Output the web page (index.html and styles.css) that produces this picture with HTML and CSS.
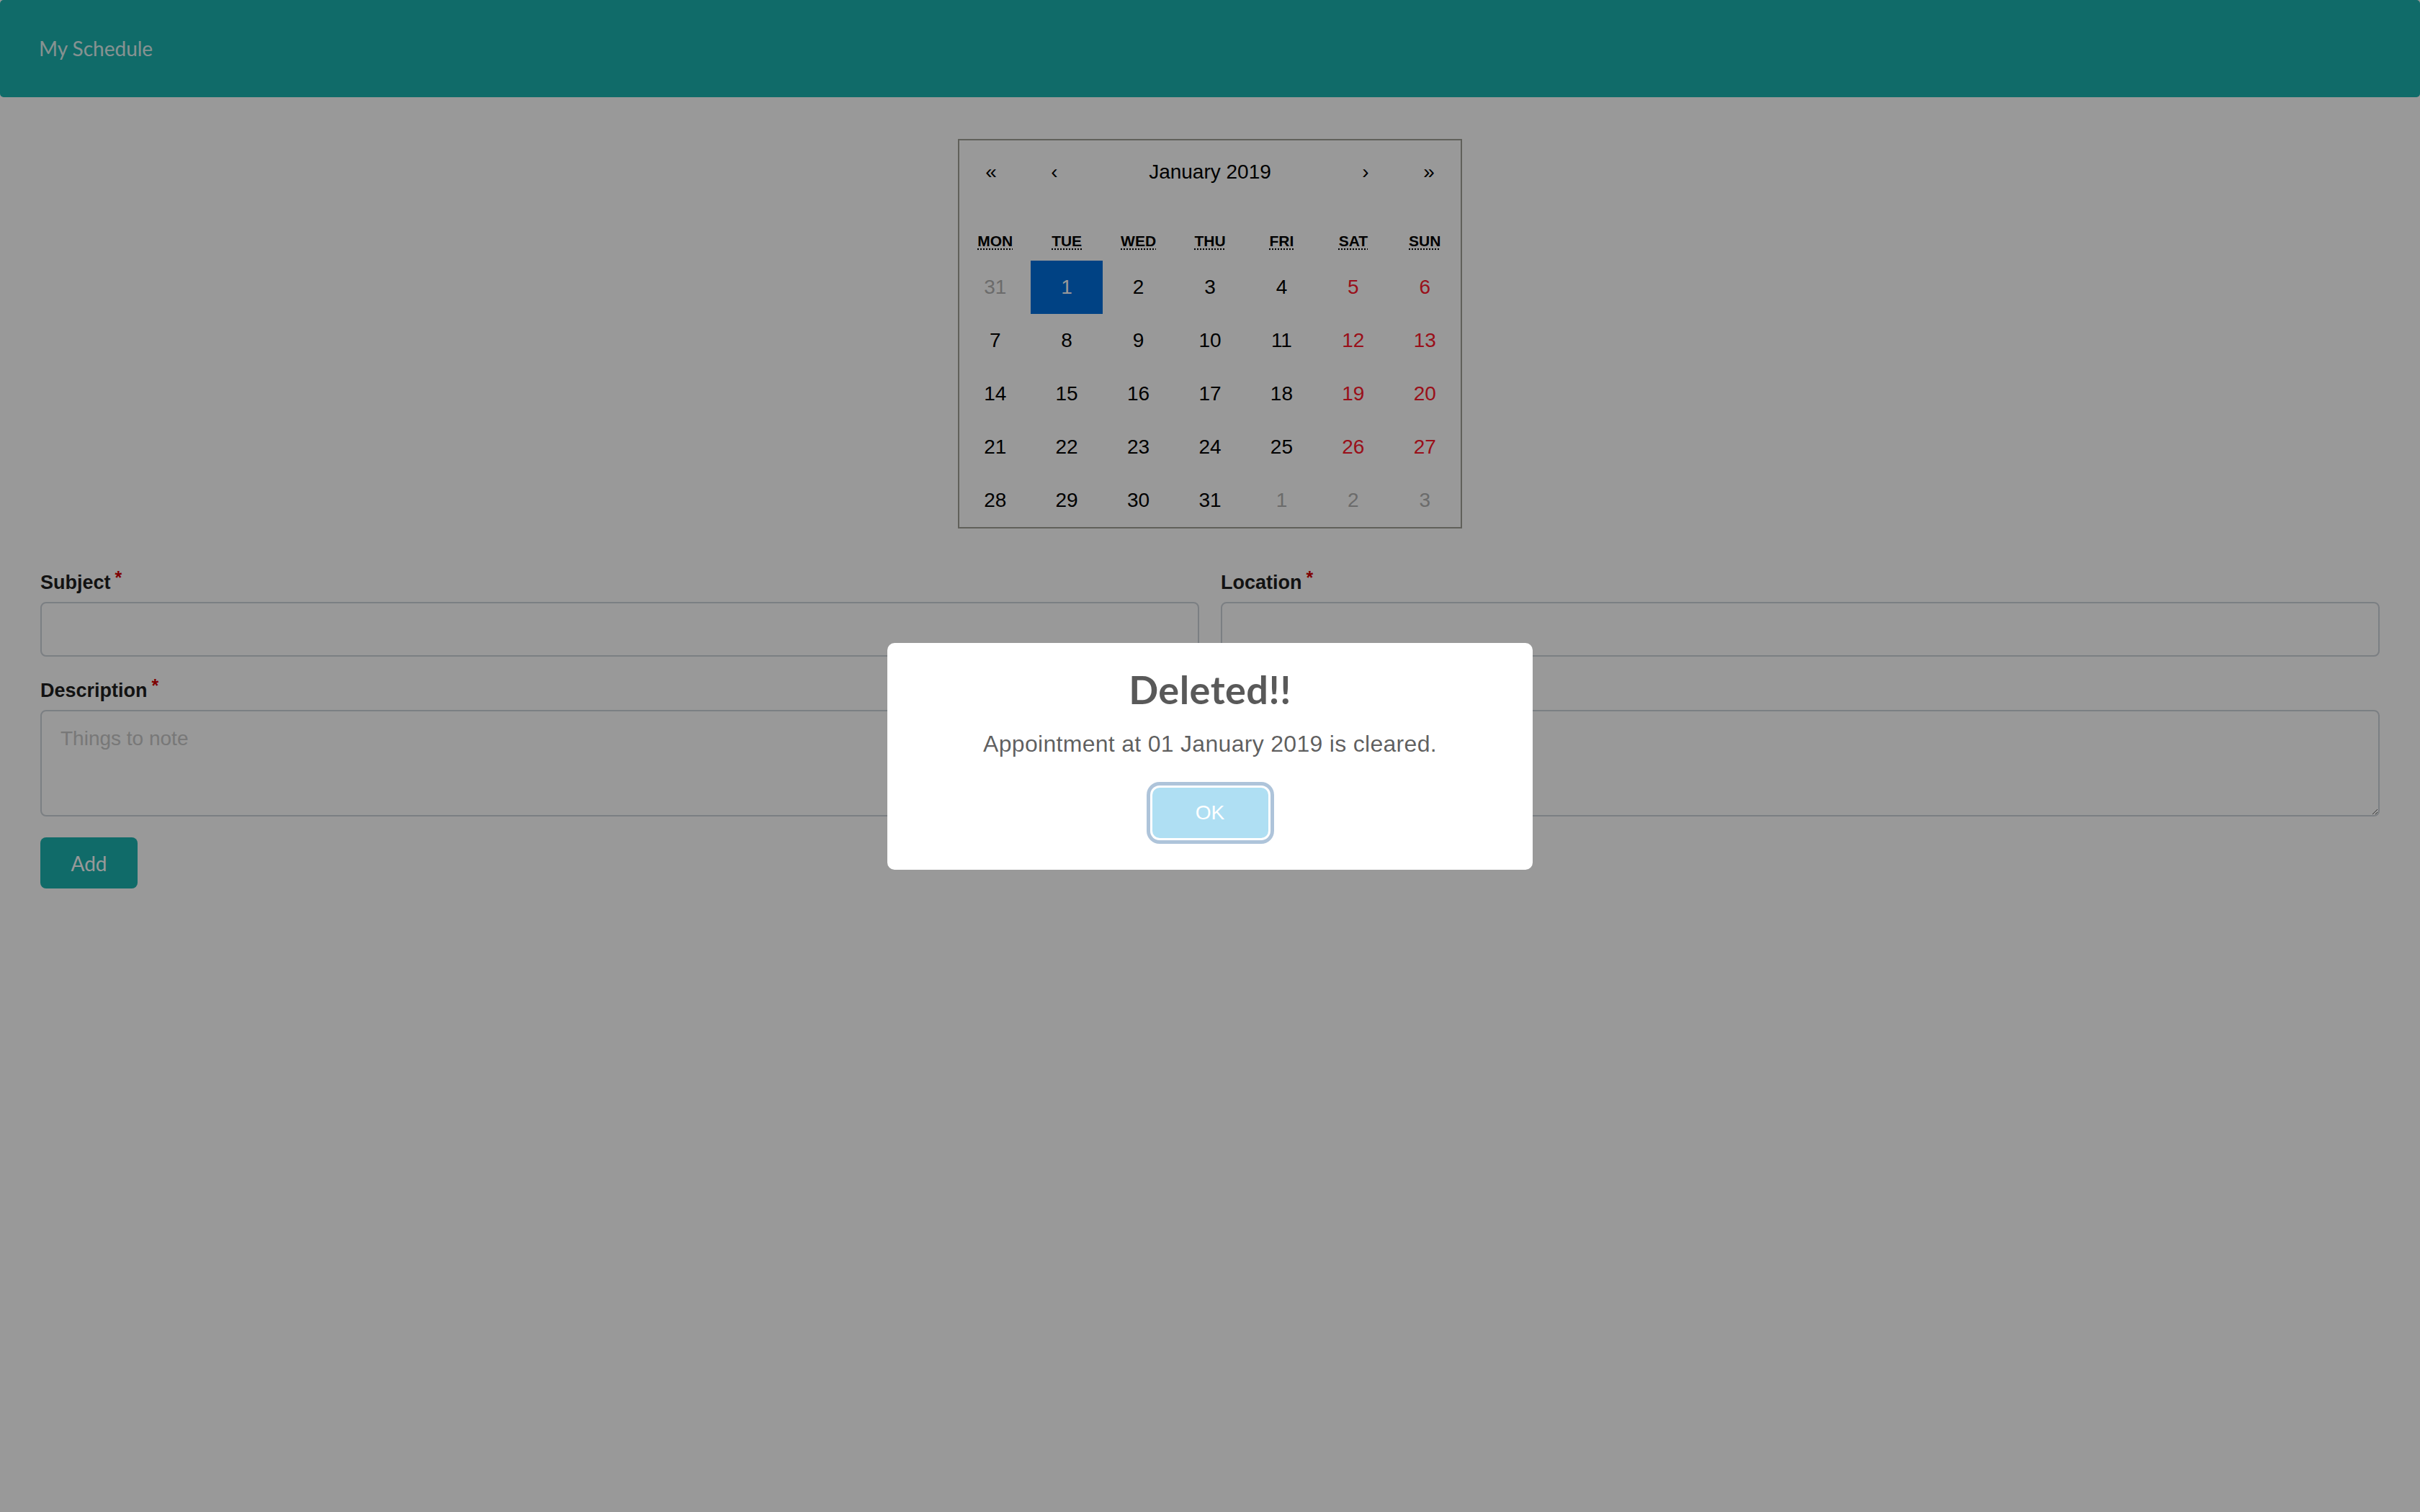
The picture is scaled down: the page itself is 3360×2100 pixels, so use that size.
FILE: index.html
```html
<!DOCTYPE html>
<html lang="en">
<head>
<meta charset="utf-8">
<title>My Schedule</title>
<link rel="stylesheet" href="styles.css">
</head>
<body>
<header class="navbar">
  <span class="brand">My Schedule</span>
</header>

<main class="page">
  <div class="calendar">
    <div class="cal-nav">
      <button class="nav-btn">«</button>
      <button class="nav-btn">‹</button>
      <button class="nav-label">January 2019</button>
      <button class="nav-btn">›</button>
      <button class="nav-btn">»</button>
    </div>
    <div class="weekdays">
      <div class="weekday"><abbr title="Monday">Mon</abbr></div>
      <div class="weekday"><abbr title="Tuesday">Tue</abbr></div>
      <div class="weekday"><abbr title="Wednesday">Wed</abbr></div>
      <div class="weekday"><abbr title="Thursday">Thu</abbr></div>
      <div class="weekday"><abbr title="Friday">Fri</abbr></div>
      <div class="weekday"><abbr title="Saturday">Sat</abbr></div>
      <div class="weekday"><abbr title="Sunday">Sun</abbr></div>
    </div>
    <div class="days">
      <button class="tile neighbor">31</button>
      <button class="tile active">1</button>
      <button class="tile">2</button>
      <button class="tile">3</button>
      <button class="tile">4</button>
      <button class="tile weekend">5</button>
      <button class="tile weekend">6</button>

      <button class="tile">7</button>
      <button class="tile">8</button>
      <button class="tile">9</button>
      <button class="tile">10</button>
      <button class="tile">11</button>
      <button class="tile weekend">12</button>
      <button class="tile weekend">13</button>

      <button class="tile">14</button>
      <button class="tile">15</button>
      <button class="tile">16</button>
      <button class="tile">17</button>
      <button class="tile">18</button>
      <button class="tile weekend">19</button>
      <button class="tile weekend">20</button>

      <button class="tile">21</button>
      <button class="tile">22</button>
      <button class="tile">23</button>
      <button class="tile">24</button>
      <button class="tile">25</button>
      <button class="tile weekend">26</button>
      <button class="tile weekend">27</button>

      <button class="tile">28</button>
      <button class="tile">29</button>
      <button class="tile">30</button>
      <button class="tile">31</button>
      <button class="tile neighbor">1</button>
      <button class="tile neighbor">2</button>
      <button class="tile neighbor">3</button>
    </div>
  </div>

  <form class="appt-form">
    <div class="form-row">
      <div class="form-group">
        <label class="field-label">Subject<span class="req">*</span></label>
        <input class="form-control" type="text">
      </div>
      <div class="form-group">
        <label class="field-label">Location<span class="req">*</span></label>
        <input class="form-control" type="text">
      </div>
    </div>
    <div class="form-group">
      <label class="field-label">Description<span class="req">*</span></label>
      <textarea class="form-control textarea" placeholder="Things to note"></textarea>
    </div>
    <button type="button" class="btn-add">Add</button>
  </form>
</main>

<div class="overlay">
  <div class="modal" role="dialog">
    <div class="modal-title">Deleted!!</div>
    <div class="modal-text">Appointment at 01 January 2019 is cleared.</div>
    <div class="modal-footer">
      <button class="btn-ok">OK</button>
    </div>
  </div>
</div>
</body>
</html>
```

FILE: styles.css
```css
* { box-sizing: border-box; }

html, body {
  margin: 0;
  padding: 0;
  background: #ffffff;
  font-family: "Liberation Sans", Arial, sans-serif;
  color: #000;
}

.navbar {
  height: 135px;
  background: #1cb2af;
  border-radius: 5px;
  display: flex;
  align-items: center;
  padding-left: 54px;
}

.brand {
  font-family: Lato, "Open Sans", sans-serif;
  font-size: 28px;
  color: #e2f4f2;
  margin-top: -2px;
}

.page {
  padding: 58px 56px 0 56px;
}

/* ---------- calendar ---------- */
.calendar {
  width: 700px;
  margin: 0 auto;
  background: #fff;
  border: 2px solid #a0a096;
  font-family: "Liberation Sans", Arial, sans-serif;
  line-height: 1.125em;
}

.calendar button {
  border: 0;
  margin: 0;
  background: none;
  font-family: "Liberation Sans", Arial, sans-serif;
  color: #000;
  padding: 0;
}

.cal-nav {
  display: flex;
  height: 88px;
  margin-bottom: 25px;
}

.nav-btn {
  width: 88px;
  font-size: 28px;
}

.nav-label {
  flex: 1;
  font-size: 28px;
}

.weekdays {
  display: grid;
  grid-template-columns: repeat(7, 1fr);
  height: 54px;
  text-align: center;
  text-transform: uppercase;
  font-weight: bold;
  font-size: 21px;
}

.weekday {
  display: flex;
  align-items: center;
  justify-content: center;
}

.weekday abbr {
  text-decoration: underline dotted;
  text-underline-offset: 3px;
}

.days {
  display: grid;
  grid-template-columns: repeat(7, 1fr);
  grid-auto-rows: 74px;
}

.tile {
  font-size: 28px;
  text-align: center;
}

.calendar .tile.weekend { color: #ff1a2c; }
.calendar .tile.neighbor { color: #b3b3b3; }
.calendar .tile.active { background: #006edc; color: #fff; }

/* ---------- form ---------- */
.appt-form {
  margin-top: 57px;
}

.form-row {
  display: grid;
  grid-template-columns: 1fr 1fr;
  column-gap: 30px;
}

.form-group {
  margin-bottom: 29px;
}

.field-label {
  display: block;
  font-size: 27px;
  line-height: 36px;
  font-weight: bold;
  color: #1e1e1e;
  margin-bottom: 9px;
}

.req {
  color: #d40000;
  font-size: 25px;
  line-height: 0;
  vertical-align: 7px;
  margin-left: 6px;
}

.form-control {
  display: block;
  width: 100%;
  height: 76px;
  border: 2px solid #ced4da;
  border-radius: 8px;
  background: #fff;
  font-family: "Liberation Sans", Arial, sans-serif;
  font-size: 28px;
  padding: 12px 24px;
  margin: 0;
}

.textarea {
  height: 148px;
  padding: 17px 26px 12px 26px;
  line-height: 42px;
  resize: vertical;
}

.textarea::placeholder {
  color: #c8c8c8;
}

.btn-add {
  display: block;
  width: 135px;
  height: 71px;
  border: 0;
  border-radius: 8px;
  background: #1cb2af;
  color: #fff;
  font-family: Lato, "Open Sans", sans-serif;
  font-size: 28px;
  margin-top: 1px;
}

/* ---------- dialog ---------- */
.overlay {
  position: fixed;
  inset: 0;
  background: rgba(0, 0, 0, 0.4);
  display: flex;
  align-items: center;
  justify-content: center;
}

.modal {
  width: 896px;
  background: #fff;
  border-radius: 10px;
  text-align: center;
  padding: 33px 32px 44px 32px;
}

.modal-title {
  font-family: Lato, "Open Sans", sans-serif;
  font-weight: 700;
  font-size: 54px;
  line-height: 64px;
  letter-spacing: 0.5px;
  color: rgba(0, 0, 0, 0.65);
}

.modal-text {
  margin-top: 25px;
  font-family: "Liberation Sans", Arial, sans-serif;
  font-size: 32px;
  line-height: 37px;
  letter-spacing: 0.3px;
  color: rgba(0, 0, 0, 0.64);
}

.modal-footer {
  margin-top: 42px;
  display: flex;
  justify-content: center;
}

.btn-ok {
  width: 161px;
  height: 70px;
  border: 0;
  border-radius: 10px;
  background: #afdff3;
  color: #fff;
  font-family: "Liberation Sans", Arial, sans-serif;
  font-size: 28px;
  box-shadow: 0 0 0 3px #fff, 0 0 0 8px #aec4da;
}
```
